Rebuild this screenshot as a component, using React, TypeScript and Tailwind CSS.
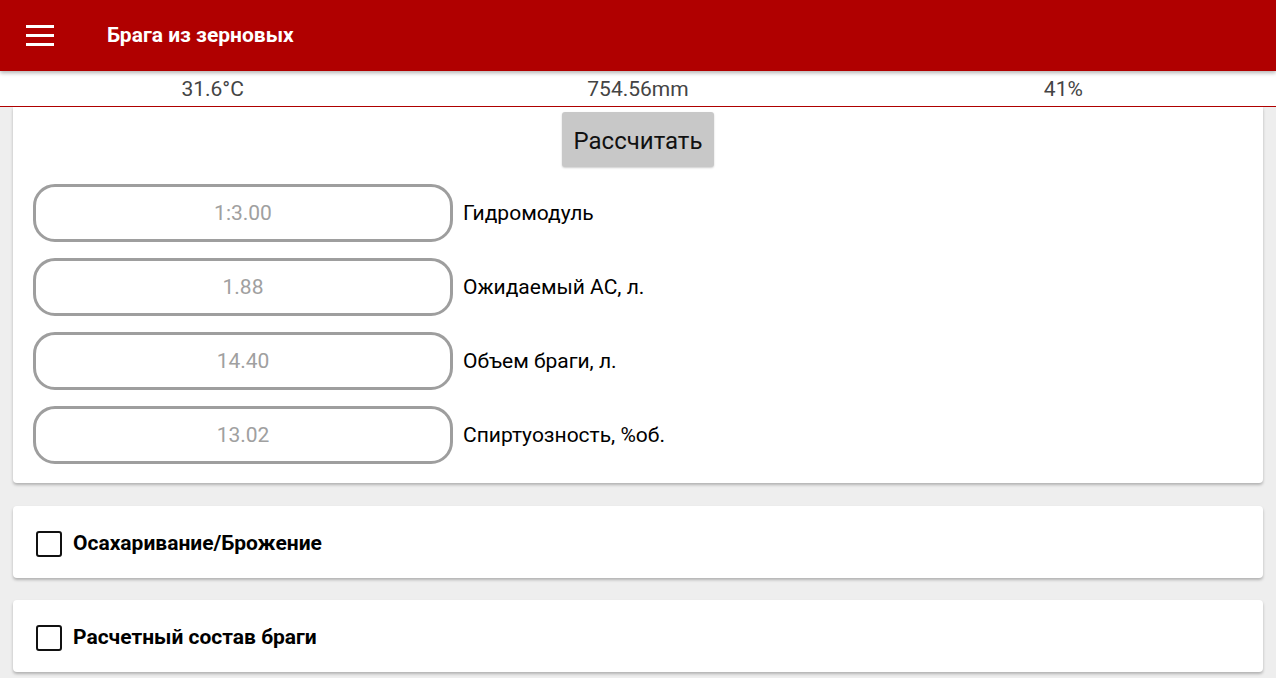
import { useState } from 'react'

const fields = [
  { value: '1:3.00', label: 'Гидромодуль' },
  { value: '1.88', label: 'Ожидаемый АС, л.' },
  { value: '14.40', label: 'Объем браги, л.' },
  { value: '13.02', label: 'Спиртуозность, %об.' },
]

function Section({ title }: { title: string }) {
  const [checked, setChecked] = useState(false)
  return (
    <div className="mx-[13px] h-[72px] bg-white rounded-[4px] shadow-[0_2px_3px_rgba(0,0,0,0.25)] flex items-center pl-[23px] pt-[3px]">
      <button
        onClick={() => setChecked(!checked)}
        className="w-[26px] h-[26px] border-[2.5px] border-[#111] rounded-[3px] bg-white"
      />
      <span className="ml-[11px] text-[21px] font-bold text-black">{title}</span>
    </div>
  )
}

export default function App() {
  return (
    <div className="w-[1276px] h-[678px] overflow-hidden bg-[#eeeeee] font-['Roboto',sans-serif]">
      <header className="relative z-10 h-[71px] bg-[#b00000] flex items-center shadow-[0_2px_4px_rgba(0,0,0,0.3)]">
        <div className="ml-[26px] w-[28px] flex flex-col gap-[6px]">
          <span className="block h-[3px] bg-white" />
          <span className="block h-[3px] bg-white" />
          <span className="block h-[3px] bg-white" />
        </div>
        <h1 className="ml-[53px] text-[21px] font-bold text-white">Брага из зерновых</h1>
      </header>

      <div className="h-[36px] pt-[3px] bg-white border-b border-[#b00000] grid grid-cols-3 text-[21px] text-[#444]">
        <div className="flex items-center justify-center">31.6°C</div>
        <div className="flex items-center justify-center">754.56mm</div>
        <div className="flex items-center justify-center">41%</div>
      </div>

      <div className="mx-[13px] bg-white rounded-b-[4px] shadow-[0_2px_3px_rgba(0,0,0,0.25)] pt-[5px] pb-[19px] px-[20px]">
        <div className="flex justify-center">
          <button className="h-[55px] pt-[2px] px-[12px] bg-[#c8c8c8] rounded-[3px] shadow-[0_1px_2px_rgba(0,0,0,0.2)] text-[24px] text-[#111]">
            Рассчитать
          </button>
        </div>
        <div className="mt-[17px] flex flex-col gap-[16px]">
          {fields.map((f) => (
            <div key={f.label} className="flex items-center">
              <div className="w-[420px] h-[58px] pt-[2px] border-[3px] border-[#9e9e9e] rounded-[22px] flex items-center justify-center text-[21px] text-[#a0a0a0]">
                {f.value}
              </div>
              <span className="ml-[10px] pt-[2px] text-[21px] text-black">{f.label}</span>
            </div>
          ))}
        </div>
      </div>

      <div className="mt-[23px] flex flex-col gap-[22px]">
        <Section title="Осахаривание/Брожение" />
        <Section title="Расчетный состав браги" />
      </div>
    </div>
  )
}
